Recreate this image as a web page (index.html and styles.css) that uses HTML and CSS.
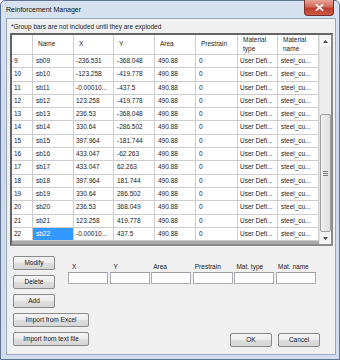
FILE: index.html
```html
<!DOCTYPE html>
<html>
<head>
<meta charset="utf-8">
<link rel="stylesheet" href="styles.css">
</head>
<body>
<div class="win">
  <div class="titlebar">
    <span class="title">Reinforcement Manager</span>
    <div class="close">
      <svg width="9" height="7" viewBox="0 0 9 7"><path d="M1.5 0.8 L7.5 6.2 M7.5 0.8 L1.5 6.2" stroke="#fff" stroke-width="1.7" stroke-linecap="square"/></svg>
    </div>
  </div>
  <div class="client">
    <div class="note">*Group bars are not included until they are exploded</div>
    <div class="gridwrap">
      <div class="grid">
        <div class="row head">
          <div class="c c0"></div>
          <div class="c c1">Name</div>
          <div class="c c2">X</div>
          <div class="c c3">Y</div>
          <div class="c c4">Area</div>
          <div class="c c5">Prestrain</div>
          <div class="c c6">Material<br>type</div>
          <div class="c c7">Material<br>name</div>
        </div>
        <div class="row"><div class="c c0">9</div><div class="c c1">sb09</div><div class="c c2">-236.531</div><div class="c c3">-368.048</div><div class="c c4">490.88</div><div class="c c5">0</div><div class="c c6">User Defi...</div><div class="c c7">steel_cu...</div></div>
        <div class="row"><div class="c c0">10</div><div class="c c1">sb10</div><div class="c c2">-123.258</div><div class="c c3">-419.778</div><div class="c c4">490.88</div><div class="c c5">0</div><div class="c c6">User Defi...</div><div class="c c7">steel_cu...</div></div>
        <div class="row"><div class="c c0">11</div><div class="c c1">sb11</div><div class="c c2">-0.00010...</div><div class="c c3">-437.5</div><div class="c c4">490.88</div><div class="c c5">0</div><div class="c c6">User Defi...</div><div class="c c7">steel_cu...</div></div>
        <div class="row"><div class="c c0">12</div><div class="c c1">sb12</div><div class="c c2">123.258</div><div class="c c3">-419.778</div><div class="c c4">490.88</div><div class="c c5">0</div><div class="c c6">User Defi...</div><div class="c c7">steel_cu...</div></div>
        <div class="row"><div class="c c0">13</div><div class="c c1">sb13</div><div class="c c2">236.53</div><div class="c c3">-368.048</div><div class="c c4">490.88</div><div class="c c5">0</div><div class="c c6">User Defi...</div><div class="c c7">steel_cu...</div></div>
        <div class="row"><div class="c c0">14</div><div class="c c1">sb14</div><div class="c c2">330.64</div><div class="c c3">-286.502</div><div class="c c4">490.88</div><div class="c c5">0</div><div class="c c6">User Defi...</div><div class="c c7">steel_cu...</div></div>
        <div class="row"><div class="c c0">15</div><div class="c c1">sb15</div><div class="c c2">397.964</div><div class="c c3">-181.744</div><div class="c c4">490.88</div><div class="c c5">0</div><div class="c c6">User Defi...</div><div class="c c7">steel_cu...</div></div>
        <div class="row"><div class="c c0">16</div><div class="c c1">sb16</div><div class="c c2">433.047</div><div class="c c3">-62.263</div><div class="c c4">490.88</div><div class="c c5">0</div><div class="c c6">User Defi...</div><div class="c c7">steel_cu...</div></div>
        <div class="row"><div class="c c0">17</div><div class="c c1">sb17</div><div class="c c2">433.047</div><div class="c c3">62.263</div><div class="c c4">490.88</div><div class="c c5">0</div><div class="c c6">User Defi...</div><div class="c c7">steel_cu...</div></div>
        <div class="row"><div class="c c0">18</div><div class="c c1">sb18</div><div class="c c2">397.964</div><div class="c c3">181.744</div><div class="c c4">490.88</div><div class="c c5">0</div><div class="c c6">User Defi...</div><div class="c c7">steel_cu...</div></div>
        <div class="row"><div class="c c0">19</div><div class="c c1">sb19</div><div class="c c2">330.64</div><div class="c c3">286.502</div><div class="c c4">490.88</div><div class="c c5">0</div><div class="c c6">User Defi...</div><div class="c c7">steel_cu...</div></div>
        <div class="row"><div class="c c0">20</div><div class="c c1">sb20</div><div class="c c2">236.53</div><div class="c c3">368.049</div><div class="c c4">490.88</div><div class="c c5">0</div><div class="c c6">User Defi...</div><div class="c c7">steel_cu...</div></div>
        <div class="row"><div class="c c0">21</div><div class="c c1">sb21</div><div class="c c2">123.258</div><div class="c c3">419.778</div><div class="c c4">490.88</div><div class="c c5">0</div><div class="c c6">User Defi...</div><div class="c c7">steel_cu...</div></div>
        <div class="row"><div class="c c0">22</div><div class="c c1 sel">sb22</div><div class="c c2">-0.00010...</div><div class="c c3">437.5</div><div class="c c4">490.88</div><div class="c c5">0</div><div class="c c6">User Defi...</div><div class="c c7">steel_cu...</div></div>
      </div>
      <div class="vscroll">
        <div class="arrow"><svg width="5" height="3" viewBox="0 0 5 3"><path d="M0 3 L2.5 0 L5 3 Z" fill="#4d4d4d"/></svg></div>
        <div class="track">
          <div class="thumb"><div class="grip"></div></div>
        </div>
        <div class="arrow"><svg width="5" height="3" viewBox="0 0 5 3"><path d="M0 0 L2.5 3 L5 0 Z" fill="#4d4d4d"/></svg></div>
      </div>
    </div>
    <div class="bottom">
      <div class="btncol">
        <div class="btn small">Modify</div>
        <div class="btn small">Delete</div>
        <div class="btn small">Add</div>
        <div class="btn wide">Import from Excel</div>
        <div class="btn wide">Import from text file</div>
      </div>
      <div class="rightpart">
        <div class="fields">
          <div class="field"><div class="lbl lx">X</div><div class="box"></div></div>
          <div class="field"><div class="lbl lx">Y</div><div class="box"></div></div>
          <div class="field"><div class="lbl">Area</div><div class="box"></div></div>
          <div class="field"><div class="lbl">Prestrain</div><div class="box"></div></div>
          <div class="field"><div class="lbl">Mat. type</div><div class="box"></div></div>
          <div class="field"><div class="lbl">Mat. name</div><div class="box"></div></div>
        </div>
        <div class="okrow">
          <div class="btn dlg">OK</div>
          <div class="btn dlg">Cancel</div>
        </div>
      </div>
    </div>
  </div>
</div>
</body>
</html>
```

FILE: styles.css
```css
* { box-sizing: border-box; }
html, body { margin: 0; padding: 0; background: #fff; }
body { width: 340px; height: 360px; overflow: hidden; font-family: "Liberation Sans", Arial, sans-serif; color: #1a1a1a; }

.win {
  width: 340px; height: 360px;
  background: linear-gradient(#d6e2f0, #cbd9ea 40%, #d2deed);
  border: 1px solid #5f7490;
  border-radius: 5px 5px 0 0;
  padding: 0 3px 4px 5px;
  display: flex; flex-direction: column;
}
.titlebar {
  height: 17px; display: flex; align-items: center; justify-content: space-between;
  position: relative;
}
.title { font-size: 7px; color: #111; margin-top: -1px; }
.close {
  position: absolute; right: 2px; top: -1px;
  width: 30px; height: 16px;
  background: linear-gradient(#e8a394, #d26b5b 45%, #bf3d2c 55%, #cc5c46);
  border: 1px solid #7a2e27; border-top: none;
  border-radius: 0 0 4px 4px;
  display: flex; align-items: center; justify-content: center;
}

.client {
  flex: 1;
  background: #f0f0f0;
  border: 1px solid #99a8bc;
  padding: 3px 0 0 3px;
  display: flex; flex-direction: column;
}
.note { font-size: 6.5px; height: 10px; line-height: 10px; padding-left: 1px; color: #1a1a1a; }

.gridwrap {
  margin-top: 1px;
  width: 323px; height: 213px;
  border: 2px solid #6e6e6e;
  border-color: #646464 #8a8a8a #8a8a8a #646464;
  background: #ababab;
  display: flex;
}
.grid { width: 307px; height: 209px; background: #ababab; font-size: 6.5px; }
.row { display: flex; height: 13.3px; }
.row.head { height: 20px; }
.c {
  background: #fff;
  border-right: 1px solid #cdcdcd; border-bottom: 1px solid #cdcdcd;
  padding-left: 3px; line-height: 12px;
  white-space: nowrap; overflow: hidden;
}
.head .c { padding-left: 5px; line-height: 8.6px; display: flex; align-items: center; }
.c0 { width: 21px; padding-left: 2px; }
.c1 { width: 41px; }
.c2 { width: 40px; padding-left: 2px; }
.c3 { width: 41px; }
.c4 { width: 41px; }
.c5 { width: 42px; }
.c6 { width: 40px; padding-left: 2px; }
.c7 { width: 41px; }
.sel { background: #3399ff; color: #fff; }

.vscroll { width: 12px; height: 209px; background: #f2f2f2; display: flex; flex-direction: column; border-left: 1px solid #e3e3e3; }
.arrow { height: 12px; display: flex; align-items: center; justify-content: center; background: #f4f4f4; }
.track { flex: 1; display: flex; flex-direction: column; justify-content: flex-end; background: #ececec; }
.thumb {
  height: 118px;
  background: linear-gradient(90deg, #f0f0f0, #dedede);
  border: 1px solid #a3a3a3; border-radius: 2px;
  display: flex; align-items: center; justify-content: center;
}
.grip { width: 5px; height: 5px; border-top: 1px solid #7a7a7a; border-bottom: 1px solid #7a7a7a; position: relative; }
.grip::after { content: ""; position: absolute; left: 0; right: 0; top: 1px; height: 1px; background: #7a7a7a; }

.bottom { flex: 1; display: flex; padding-top: 10px; }
.btncol { width: 58px; padding-left: 3px; display: flex; flex-direction: column; gap: 5px; }
.btn {
  height: 14px;
  border: 1px solid #8a8a8a; border-radius: 2px;
  background: linear-gradient(#f4f4f4, #ececec 50%, #dddddd 51%, #d6d6d6);
  font-size: 6.5px; line-height: 12px; text-align: center; color: #1a1a1a;
  white-space: nowrap;
}
.small { width: 42px; }
.wide { width: 76px; }

.rightpart { flex: 1; display: flex; flex-direction: column; justify-content: space-between; padding-bottom: 7px; }
.fields { display: flex; gap: 1.6px; padding-top: 7px; }
.field { width: 40px; }
.lbl { font-size: 6.5px; height: 9px; line-height: 8px; padding-left: 2px; color: #1a1a1a; white-space: nowrap; }
.lbl.lx { padding-left: 4px; }
.box { height: 12px; background: #fff; border: 1px solid #a9acb3; border-top-color: #9a9da4; }

.okrow { display: flex; justify-content: flex-end; gap: 6px; padding-right: 15px; }
.dlg { width: 42px; }
```
